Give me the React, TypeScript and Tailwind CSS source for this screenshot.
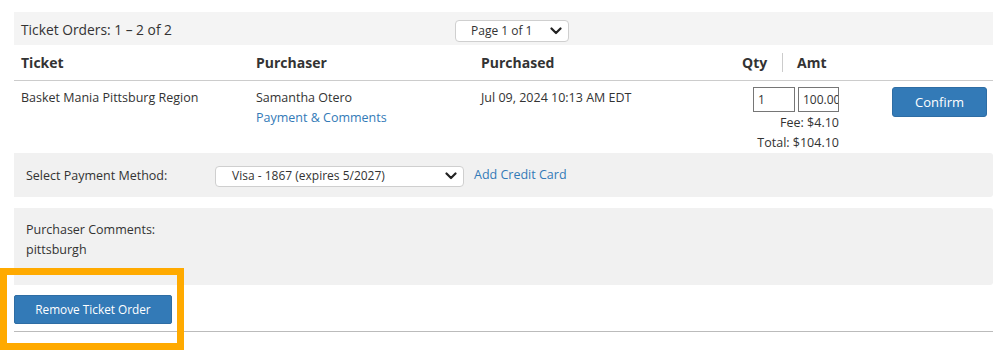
import React from "react";

function Chevron() {
  return (
    <svg width="12" height="8" viewBox="0 0 12 8" className="block">
      <polyline points="1.5,1.5 6,6 10.5,1.5" fill="none" stroke="#222" strokeWidth="2.2" strokeLinecap="round" strokeLinejoin="round" />
    </svg>
  );
}

export default function App() {
  return (
    <div className="relative w-[997px] h-[351px] bg-white text-[#333] text-[12.5px]" style={{ fontFamily: '"Open Sans", "Noto Sans", sans-serif' }}>
      <div className="pt-[12px] pl-[14px] w-[993px]">
        {/* Top bar */}
        <div className="h-[33px] bg-[#f4f4f4] grid grid-cols-[441px_114px_1fr] items-center">
          <div className="pl-[7px] text-[13.8px] leading-[20px] pt-[2px]">Ticket Orders: 1 – 2 of 2</div>
          <div className="h-[22px] mt-[4px] bg-white border border-[#cfcfcf] rounded-[4px] flex items-center justify-between pl-[15px] pr-[6px] text-[12px]">
            <span className="pt-[1px]">Page 1 of 1</span>
            <Chevron />
          </div>
          <div />
        </div>
        {/* Header row */}
        <div className="h-[36px] border-b border-[#cccccc] flex items-center font-bold text-[14px]">
          <div className="w-[242px] pl-[7px]">Ticket</div>
          <div className="w-[225px]">Purchaser</div>
          <div className="w-[261px]">Purchased</div>
          <div className="w-[25px] text-right">Qty</div>
          <div className="w-[1px] h-[19px] bg-[#cccccc] ml-[15px] mr-[14px]" />
          <div>Amt</div>
        </div>
        {/* Data row */}
        <div className="h-[72px] flex pt-[6px] leading-[20px]">
          <div className="w-[242px] pl-[7px] pt-[1px]">Basket Mania Pittsburg Region</div>
          <div className="w-[225px] pt-[1px]">
            <div>Samantha Otero</div>
            <div className="text-[#337ab7]">Payment &amp; Comments</div>
          </div>
          <div className="w-[272px] pt-[1px]">Jul 09, 2024 10:13 AM EDT</div>
          <div className="w-[86px] flex flex-col items-end">
            <div className="flex gap-[3px] mb-[1px]">
              <div className="w-[42px] h-[25px] border border-[#767676] flex items-center pl-[4px] text-[12px]">1</div>
              <div className="w-[41px] h-[25px] border border-[#767676] flex items-center pl-[4px] text-[12px] overflow-hidden whitespace-nowrap">100.00</div>
            </div>
            <div>Fee: $4.10</div>
            <div>Total: $104.10</div>
          </div>
          <div className="ml-[53px]">
            <div className="w-[95px] h-[30px] bg-[#337ab7] border border-[#2e6da4] rounded-[3px] text-white flex items-center justify-center text-[13px]">Confirm</div>
          </div>
        </div>
        {/* Payment method */}
        <div className="h-[44px] bg-[#f1f1f1] rounded-r-[3px] flex items-center">
          <div className="w-[201px] pl-[12px] pt-[2px]">Select Payment Method:</div>
          <div className="w-[249px] h-[21px] mt-[2px] bg-white border border-[#cfcfcf] rounded-[4px] flex items-center justify-between pl-[16px] pr-[6px] text-[12px]">
            <span>Visa - 1867 (expires 5/2027)</span>
            <Chevron />
          </div>
          <div className="ml-[10px] text-[#337ab7] pt-[1px]">Add Credit Card</div>
        </div>
        {/* Comments */}
        <div className="mt-[11px] h-[77px] bg-[#f1f1f1] rounded-r-[3px] pt-[12px] pl-[12px] leading-[20px]">
          <div>Purchaser Comments:</div>
          <div>pittsburgh</div>
        </div>
        {/* Remove button */}
        <div className="pt-[10px] pb-[7px]">
          <div className="w-[158px] h-[29px] bg-[#337ab7] border border-[#2e6da4] rounded-[2px] text-white text-[11.8px] flex items-center justify-center">Remove Ticket Order</div>
        </div>
        <div className="h-[1px] bg-[#bbbbbb]" />
      </div>
      {/* Highlight overlay */}
      <div className="absolute left-0 top-[268px] w-[184px] h-[82px] border-[7px] border-[#ffaa00] pointer-events-none" />
    </div>
  );
}
